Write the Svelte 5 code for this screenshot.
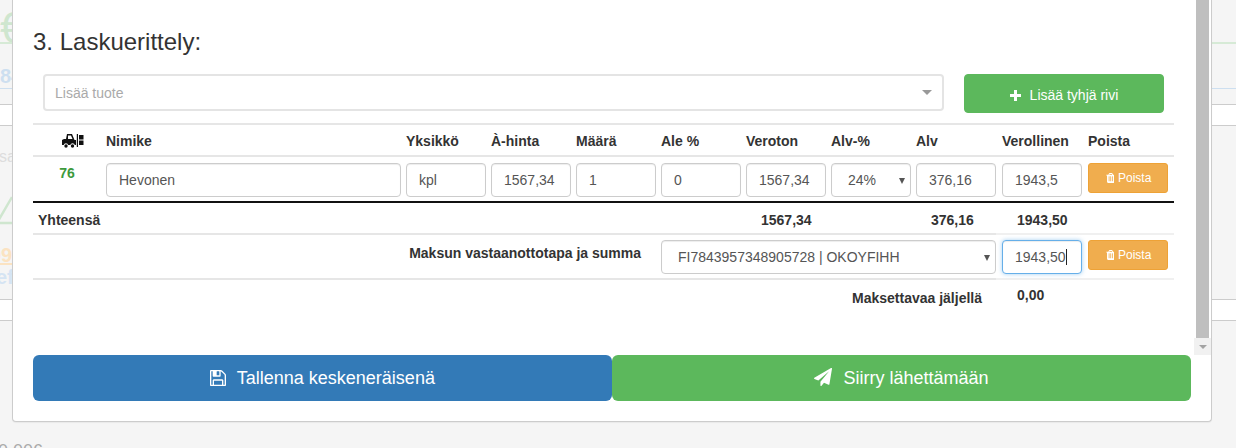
<script>
  const headers = ['Yksikkö', 'À-hinta', 'Määrä', 'Ale %', 'Veroton', 'Alv-%', 'Alv'];
  const trash = 'M704 1376v-704q0-14-9-23t-23-9h-64q-14 0-23 9t-9 23v704q0 14 9 23t23 9h64q14 0 23-9t9-23zm256 0v-704q0-14-9-23t-23-9h-64q-14 0-23 9t-9 23v704q0 14 9 23t23 9h64q14 0 23-9t9-23zm256 0v-704q0-14-9-23t-23-9h-64q-14 0-23 9t-9 23v704q0 14 9 23t23 9h64q14 0 23-9t9-23zm-544-992h448l-48-117q-7-9-17-11h-317q-10 2-17 11zm928 32v64q0 14-9 23t-23 9h-96v948q0 83-47 143.5t-113 60.5h-832q-66 0-113-58.5t-47-141.5v-952h-96q-14 0-23-9t-9-23v-64q0-14 9-23t23-9h309l70-167q15-37 54-63t79-26h320q40 0 79 26t54 63l70 167h309q14 0 23 9t9 23z';
</script>

{#snippet poista()}
  <button class="btn-poista">
    <svg class="trash" viewBox="0 0 1408 1792"><path fill="currentColor" d={trash} /></svg>
    Poista
  </button>
{/snippet}

<div class="page">
  <!-- page behind the modal, only the edges show -->
  <div class="bg-top">
    <div class="bg-euro">€</div>
    <div class="bg-link">84</div>
  </div>
  <div class="bg-band"></div>
  <div class="bg-mid">
    <div class="bg-muted">ssa</div>
    <svg class="bg-warn" width="30" height="30" viewBox="0 0 30 30"><path d="M16 1 L1 27 H30" fill="none" stroke="#cfe6cf" stroke-width="2.5" /></svg>
    <div class="bg-orange">99</div>
    <div class="bg-blue">ef</div>
  </div>
  <div class="bg-band"></div>
  <div class="bg-foot">0,006</div>

  <div class="modal">
    <div class="modal-scroll">
      <div class="modal-body">
        <h3>3. Laskuerittely:</h3>

        <div class="add-row">
          <div class="product-select">
            <span>Lisää tuote</span>
            <i class="caret"></i>
          </div>
          <button class="btn-add">
            <svg class="plus" viewBox="0 0 11 11"><path fill="#fff" d="M4 0h3v4h4v3H7v4H4V7H0V4h4z" /></svg>
            Lisää tyhjä rivi
          </button>
        </div>

        <table>
          <colgroup>
            <col class="c-stock" /><col class="c-name" />
            <col class="c-n" /><col class="c-n" /><col class="c-n" /><col class="c-n" />
            <col class="c-n" /><col class="c-n" /><col class="c-n" />
            <col class="c-total" /><col class="c-del" />
          </colgroup>
          <thead>
            <tr>
              <th class="stock-head">
                <svg class="forklift" width="22" height="14" viewBox="0 0 22 14">
                  <path fill="#111" d="M5 0h5l2.500 6h1.500v5h-1.200a2.300 2.300 0 0 0-4.500 0H6.200a2.300 2.300 0 0 0-4.500 0H0V6l2-1h2zM6 1.500V5h4.500L9 1.500z" />
                  <circle cx="4" cy="12" r="1.700" fill="#111" /><circle cx="10.500" cy="12" r="1.700" fill="#111" />
                  <path fill="#111" d="M14.800 0h1.200v13h-1.200zM17 1h4.500v4.500H17zM17 6.500h4.500V11H17z" />
                </svg>
              </th>
              <th>Nimike</th>
              {#each headers as h}
                <th>{h}</th>
              {/each}
              <th class="wide">Verollinen</th>
              <th class="wide">Poista</th>
            </tr>
          </thead>
          <tbody>
            <tr class="item-row">
              <td class="stock">76</td>
              <td><input value="Hevonen" /></td>
              <td><input value="kpl" /></td>
              <td><input value="1567,34" /></td>
              <td><input value="1" /></td>
              <td><input value="0" /></td>
              <td><input value="1567,34" /></td>
              <td>
                <div class="select-wrap">
                  <select><option>24%</option></select>
                </div>
              </td>
              <td><input value="376,16" /></td>
              <td class="wide"><input value="1943,5" /></td>
              <td class="wide">{@render poista()}</td>
            </tr>
            <tr class="sum-row">
              <td colspan="2" class="sum-label">Yhteensä</td>
              <td colspan="4"></td>
              <td class="num">1567,34</td>
              <td></td>
              <td class="num">376,16</td>
              <td class="num light">1943,50</td>
              <td class="light"></td>
            </tr>
            <tr class="pay-row">
              <td colspan="5" class="pay-label">Maksun vastaanottotapa ja summa</td>
              <td colspan="4">
                <div class="select-wrap">
                  <select><option>FI7843957348905728 | OKOYFIHH</option></select>
                </div>
              </td>
              <td class="wide light">
                <div class="focus-wrap">
                  <input class="focused" value="1943,50" />
                  <span class="text-caret"></span>
                </div>
              </td>
              <td class="wide light">{@render poista()}</td>
            </tr>
            <tr class="left-row">
              <td colspan="9" class="left-label">Maksettavaa jäljellä</td>
              <td class="left-value">0,00</td>
              <td></td>
            </tr>
          </tbody>
        </table>
      </div>

      <div class="scrollbar">
        <div class="thumb"></div>
        <div class="arrow"><i></i></div>
      </div>
    </div>

    <div class="modal-footer">
      <button class="btn-big blue">
        <svg class="big-icon floppy" viewBox="0 0 1536 1536"><path fill="#fff" transform="translate(0 -128)" d="M384 1536h768v-384H384v384zm896 0h128V640q0-14-10-38.500t-20-34.500l-281-281q-10-10-34-20t-39-10v416q0 40-28 68t-68 28H352q-40 0-68-28t-28-68V256H128v1280h128v-416q0-40 28-68t68-28h832q40 0 68 28t28 68v416zM896 608V288q0-13-9.500-22.500T864 256H672q-13 0-22.500 9.500T640 288v320q0 13 9.500 22.500T672 640h192q13 0 22.500-9.500T896 608zm640 32v928q0 40-28 68t-68 28H96q-40 0-68-28t-28-68V224q0-40 28-68t68-28h928q40 0 88 20t76 48l280 280q28 28 48 76t20 88z" /></svg>
        Tallenna keskeneräisenä
      </button>
      <button class="btn-big green">
        <svg class="big-icon plane" viewBox="0 0 1792 1792"><path fill="#fff" d="M1764 11q33 24 27 64l-256 1536q-5 29-32 45-14 8-31 8-11 0-24-5l-453-185-242 295q-18 23-49 23-13 0-22-4-19-7-30.500-23.500t-11.500-36.500v-349l864-1059-1069 925-395-162q-37-14-40-55-2-40 32-59l1664-960q15-9 32-9 20 0 36 11z" /></svg>
        Siirry lähettämään
      </button>
    </div>
  </div>
</div>

<style>
  :global(body) {
    margin: 0;
    background: #f5f5f5;
  }

  .page {
    position: relative;
    height: 448px;
    overflow: hidden;
    font-family: "Liberation Sans", Arial, sans-serif;
    font-size: 14px;
    color: #333;
  }

  /* background page */
  .bg-top {
    height: 104px;
    box-sizing: border-box;
  }
  .bg-euro {
    height: 44px;
    font-size: 44px;
    line-height: 56px;
    overflow: hidden;
    color: #cfe6cf;
    border-bottom: 2px solid #d6ead6;
    box-sizing: border-box;
  }
  .bg-link {
    margin-top: 20px;
    font-size: 20px;
    font-weight: bold;
    line-height: 24px;
    color: #cddff0;
    border-bottom: 1px solid #cddff0;
  }
  .bg-band {
    height: 20px;
    background: #fff;
    border-top: 1px solid #ccc;
    border-bottom: 1px solid #ccc;
  }
  .bg-mid {
    height: 173px;
    overflow: hidden;
  }
  .bg-muted {
    margin: 22px 0 0 -9px;
    height: 18px;
    font-size: 16px;
    line-height: 18px;
    color: #ddd;
  }
  .bg-warn {
    display: block;
    margin: 30px 0 0 -4px;
  }
  .bg-orange {
    margin: 19px 0 0 -10px;
    height: 21px;
    font-size: 20px;
    font-weight: bold;
    line-height: 21px;
    color: #fbe3c2;
    text-decoration: underline;
  }
  .bg-blue {
    font-size: 20px;
    font-weight: bold;
    line-height: 23px;
    color: #d5e4f3;
    margin-left: -4px;
  }
  .bg-foot {
    margin: 120px 0 0 -2px;
    font-size: 18px;
    line-height: 20px;
    color: #aaa;
  }

  /* modal over the page */
  .modal {
    position: absolute;
    left: 12px;
    top: 0;
    width: 1200px;
    height: 422px;
    box-sizing: border-box;
    background: #fff;
    border: 1px solid #ccc;
    border-top: 0;
    border-radius: 0 0 4px 4px;
    box-shadow: 0 1px 1px rgba(0, 0, 0, 0.05);
  }
  .modal-scroll {
    display: flex;
    height: 355px;
  }
  .modal-body {
    flex: 1;
    padding: 29px 20px 0 20px;
    min-width: 0;
  }
  h3 {
    margin: 0 0 19px;
    font-size: 24px;
    font-weight: 400;
    line-height: 26px;
  }

  .add-row {
    display: flex;
    align-items: flex-start;
    gap: 20px;
    padding-left: 10px;
    height: 49px;
  }
  .product-select {
    box-sizing: border-box;
    width: 901px;
    height: 37px;
    padding: 0 10px;
    display: flex;
    align-items: center;
    justify-content: space-between;
    border: 2px solid #e4e4e4;
    border-radius: 4px;
    color: #aaa;
  }
  .caret {
    width: 0;
    height: 0;
    border-left: 5px solid transparent;
    border-right: 5px solid transparent;
    border-top: 5px solid #999;
  }
  .btn-add {
    width: 200px;
    height: 39px;
    border: 1px solid #5cb85c;
    border-radius: 4px;
    background: #5cb85c;
    color: #fff;
    font: 14px "Liberation Sans", Arial, sans-serif;
    padding: 2px 0 0 0;
    cursor: pointer;
  }
  .plus {
    width: 11px;
    height: 11px;
    margin-right: 5px;
    vertical-align: -1px;
  }

  table {
    width: 1141px;
    border-collapse: collapse;
    table-layout: fixed;
  }
  .c-stock { width: 68px; }
  .c-name { width: 300px; }
  .c-n { width: 85px; }
  .c-total { width: 86px; }
  .c-del { width: 92px; }

  th {
    height: 29px;
    padding: 1px 0 0 5px;
    text-align: left;
    font-weight: bold;
    border-top: 2px solid #e6e6e6;
    border-bottom: 2px solid #e6e6e6;
  }
  th.wide, td.wide {
    padding-left: 6px;
  }
  .stock-head {
    padding-left: 29px;
  }
  .forklift {
    display: block;
  }
  td {
    padding: 0 0 0 5px;
    vertical-align: top;
  }

  input, select {
    display: block;
    box-sizing: border-box;
    width: 100%;
    height: 34px;
    margin: 0;
    padding: 0 8px 0 12px;
    font: 14px "Liberation Sans", Arial, sans-serif;
    color: #555;
    background: #fff;
    border: 1px solid #ccc;
    border-radius: 4px;
    box-shadow: inset 0 1px 1px rgba(0, 0, 0, 0.075);
  }
  select {
    appearance: none;
    padding-left: 16px;
  }
  .select-wrap {
    position: relative;
  }
  .select-wrap::after {
    content: "";
    position: absolute;
    right: 6px;
    top: 15px;
    border-left: 3.500px solid transparent;
    border-right: 3.500px solid transparent;
    border-top: 6px solid #555;
  }

  .item-row td {
    padding-top: 6px;
    padding-bottom: 4px;
    border-bottom: 2px solid #111;
  }
  .item-row .stock {
    padding: 8px 0 0 0;
    text-align: center;
    font-weight: bold;
    color: #3d9a3d;
  }

  .btn-poista {
    display: block;
    box-sizing: border-box;
    width: 80px;
    height: 30px;
    padding: 0;
    background: #f0ad4e;
    border: 1px solid #eea236;
    border-radius: 3px;
    color: #fff;
    font: 12px "Liberation Sans", Arial, sans-serif;
    cursor: pointer;
  }
  .trash {
    width: 9px;
    height: 12px;
    margin-right: 1px;
    vertical-align: -2px;
  }

  .sum-row td {
    height: 27px;
    padding-top: 3px;
    vertical-align: middle;
    font-weight: bold;
    border-bottom: 2px solid #e6e6e6;
  }
  .sum-row .num {
    padding-left: 20px;
    white-space: nowrap;
  }
  .sum-row td.num.light {
    padding-left: 21px;
  }

  .pay-row td {
    padding-top: 5px;
    padding-bottom: 4px;
    border-bottom: 2px solid #e6e6e6;
  }
  .pay-row .pay-label {
    padding: 10px 15px 0 0;
    text-align: right;
    font-weight: bold;
  }
  .sum-row td.light, .pay-row td.light {
    border-bottom-color: #f0f0f0;
  }
  .focus-wrap {
    position: relative;
  }
  .focused {
    border-color: #66afe9;
    box-shadow: inset 0 1px 1px rgba(0, 0, 0, 0.075), 0 0 4px rgba(102, 175, 233, 0.6);
    outline: 0;
  }
  .text-caret {
    position: absolute;
    left: 64px;
    top: 9px;
    width: 1px;
    height: 16px;
    background: #222;
  }

  .left-row td {
    font-weight: bold;
  }
  .left-row .left-label {
    padding: 10px 14px 0 0;
    text-align: right;
  }
  .left-row .left-value {
    padding: 7px 0 0 21px;
  }

  .scrollbar {
    width: 17px;
    flex: none;
    display: flex;
    flex-direction: column;
  }
  .thumb {
    height: 338px;
    width: 13px;
    margin-left: 2px;
    background: #bfbfbf;
  }
  .arrow {
    height: 17px;
    background: #f1f1f1;
    display: flex;
    align-items: center;
    justify-content: center;
  }
  .arrow i {
    border-left: 4px solid transparent;
    border-right: 4px solid transparent;
    border-top: 4px solid #a3a3a3;
  }

  .modal-footer {
    display: flex;
    padding-left: 20px;
  }
  .btn-big {
    width: 579px;
    height: 46px;
    padding: 0;
    border: 0;
    border-radius: 6px;
    color: #fff;
    font: 18px "Liberation Sans", Arial, sans-serif;
    cursor: pointer;
  }
  .blue { background: #337ab7; }
  .green { background: #5cb85c; }
  .big-icon {
    vertical-align: -2px;
  }
  .floppy {
    width: 16px;
    height: 16px;
    margin-right: 6px;
  }
  .plane {
    width: 18px;
    height: 18px;
    margin-right: 6px;
  }
</style>
